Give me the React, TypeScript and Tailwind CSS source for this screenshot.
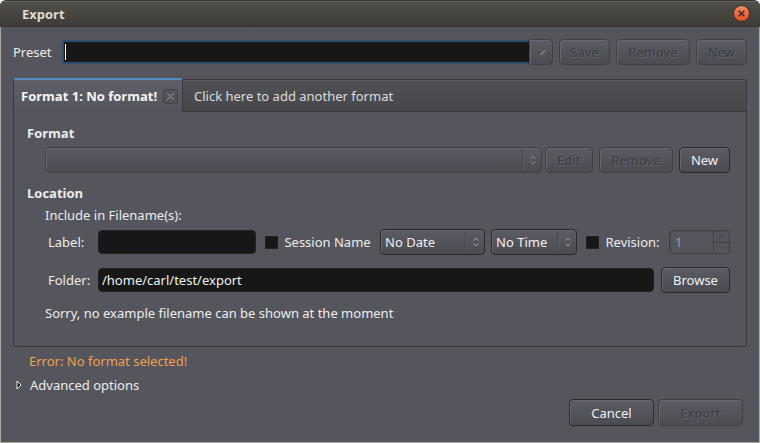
import { useState } from "react";
import type { ButtonHTMLAttributes, SelectHTMLAttributes } from "react";
import { clsx } from "clsx";

const raised =
  "rounded-[4px] border bg-linear-to-b from-[#5b5b65] to-[#4b4c52] shadow-[inset_1px_1px_0_#676772]";
const enabledLook = "border-[#2b2b2f] text-[#f0f0f0]";
const disabledLook =
  "border-[#404145] text-[#3c3c43] [text-shadow:1px_1px_0_#65656f]";
const field =
  "h-6 rounded-[4px] border border-[#222224] bg-[#171717] px-[3px] text-[#f0f0f0] outline-none";
const heading = "font-['Open_Sans','Noto_Sans',sans-serif] font-bold";

function Button({
  className,
  disabled,
  ...rest
}: ButtonHTMLAttributes<HTMLButtonElement>) {
  return (
    <button
      type="button"
      disabled={disabled}
      className={clsx(
        "flex h-[26px] shrink-0 items-center justify-center",
        raised,
        disabled ? disabledLook : enabledLook,
        className,
      )}
      {...rest}
    />
  );
}

function UpDown({ color }: { color: string }) {
  return (
    <svg width="8" height="10" viewBox="0 0 8 10" fill="none" stroke={color} strokeWidth="1">
      <path d="M1.5 3.5 4 1l2.5 2.5M1.5 6.5 4 9l2.5-2.5" />
    </svg>
  );
}

function Combo({
  className,
  options,
  disabled,
  ...rest
}: SelectHTMLAttributes<HTMLSelectElement> & { options: string[] }) {
  return (
    <div className={clsx("relative h-[26px]", className)}>
      <select
        disabled={disabled}
        className={clsx(
          "h-full w-full appearance-none pl-1 pr-5 opacity-100 outline-none",
          raised,
          disabled ? disabledLook : enabledLook,
        )}
        {...rest}
      >
        {options.map((o) => (
          <option key={o}>{o}</option>
        ))}
      </select>
      <span className="pointer-events-none absolute inset-y-[3px] right-0 flex w-5 items-center justify-center border-l border-[#47474e] shadow-[inset_1px_0_0_#5d5d67]">
        <UpDown color={disabled ? "#86868c" : "#a0a0a4"} />
      </span>
    </div>
  );
}

function Check({ label }: { label: string }) {
  return (
    <label className="flex items-center gap-1.5 whitespace-nowrap">
      <input
        type="checkbox"
        className="size-[13px] appearance-none border border-[#242426] bg-[#171717] checked:bg-[#4a86bd]"
      />
      {label}
    </label>
  );
}

function TitleBar() {
  return (
    <header className="flex h-[27px] items-center justify-between rounded-t-[6px] border-t border-b border-t-[#35342f] border-b-[#33322e] bg-linear-to-b from-[#504f49] to-[#3d3c38] pr-[10px] pl-[22px] shadow-[inset_0_1px_0_#66655e]">
      <h1 className={clsx(heading, "text-[#dfdbd2]")}>Export</h1>
      <button
        type="button"
        aria-label="Close"
        className="flex size-[17px] items-center justify-center rounded-full border border-[#30302c] bg-linear-to-b from-[#f5885f] to-[#e04f1d]"
      >
        <svg width="9" height="9" viewBox="0 0 8 8" stroke="#3a2119" strokeWidth="1.2">
          <path d="m1.5 1.5 5 5m0-5-5 5" />
        </svg>
      </button>
    </header>
  );
}

function PresetRow() {
  const [preset, setPreset] = useState("");
  return (
    <div className="flex items-center gap-1.5">
      <label htmlFor="preset" className="w-[43px]">
        Preset
      </label>
      <div className="relative flex flex-1">
        <input
          id="preset"
          value={preset}
          onChange={(e) => setPreset(e.target.value)}
          className="my-px h-6 min-w-0 flex-1 rounded-l-[3px] border-2 border-r-0 border-[#2f4c6c] bg-[#171717] px-1 text-[#f0f0f0] outline-none"
        />
        {preset === "" && (
          <span className="pointer-events-none absolute top-[5px] left-[3px] h-4 w-px bg-white" />
        )}
        <Button disabled aria-label="Show presets" className="w-6 rounded-l-none">
          <svg width="10" height="7" viewBox="0 0 10 7" fill="none">
            <path d="M1 2.5 4.5 6" stroke="#404047" />
            <path d="M4.5 6 9 1.5" stroke="#b8b8bc" />
          </svg>
        </Button>
      </div>
      <Button disabled className="w-[51px]">Save</Button>
      <Button disabled className="w-[74px]">Remove</Button>
      <Button disabled className="w-[51px]">New</Button>
    </div>
  );
}

function TabBar() {
  return (
    <div className="flex h-[34px]">
      <div className="flex w-[170px] shrink-0 items-center justify-between rounded-t-[3px] border-t-2 border-r border-l border-t-[#558dc4] border-r-[#38393c] border-l-[#38393c] bg-linear-to-b from-[#5e5e69] to-[#55555d] pr-1 pl-[7px]">
        <button type="button" className={clsx(heading, "whitespace-nowrap text-[#f4f4f4]")}>
          Format 1: No format!
        </button>
        <button
          type="button"
          aria-label="Close format"
          className="flex size-[15px] items-center justify-center rounded-[3px] border border-[#424247] bg-[#53535b]"
        >
          <svg width="9" height="9" viewBox="0 0 9 9" stroke="#929297" strokeWidth="1">
            <path d="m1 1 7 7m0-7-7 7" />
          </svg>
        </button>
      </div>
      <button
        type="button"
        className="mt-px flex flex-1 items-center rounded-tr-[4px] border-t border-r border-b border-[#38393c] bg-linear-to-b from-[#4f5055] to-[#47484b] pl-[11px] text-left text-[#dcdcdc] shadow-[inset_0_1px_0_#595a60]"
      >
        Click here to add another format
      </button>
    </div>
  );
}

function FormatSection() {
  return (
    <section>
      <h2 className={heading}>Format</h2>
      <div className="mt-1 flex gap-1.5 pl-[18px]">
        <div className="flex flex-1 gap-[3px]">
          <Combo disabled aria-label="Format" options={[""]} className="flex-1" />
          <Button disabled className="w-12">Edit</Button>
        </div>
        <Button disabled className="w-[74px]">Remove</Button>
        <Button className="w-[51px]">New</Button>
      </div>
    </section>
  );
}

function Revision() {
  return (
    <div className="flex h-6 w-[61px] rounded-[4px] border border-[#404145] shadow-[inset_1px_1px_0_#4c4c53]">
      <input
        aria-label="Revision number"
        disabled
        defaultValue="1"
        className="w-0 min-w-0 flex-1 bg-transparent pl-[5px] text-[#9a9a9f]"
      />
      <div className="flex w-4 flex-col divide-y divide-[#404145] border-l border-[#404145] text-[#3c3c43]">
        <button type="button" disabled aria-label="Increase" className="flex flex-1 items-center justify-center">
          <svg width="8" height="5" viewBox="0 0 8 5" fill="none" stroke="currentColor">
            <path d="m1 4 3-3 3 3" />
          </svg>
        </button>
        <button type="button" disabled aria-label="Decrease" className="flex flex-1 items-center justify-center">
          <svg width="8" height="5" viewBox="0 0 8 5" fill="none" stroke="currentColor">
            <path d="m1 1 3 3 3-3" />
          </svg>
        </button>
      </div>
    </div>
  );
}

function LocationSection() {
  return (
    <section className="mt-[10px]">
      <h2 className={heading}>Location</h2>
      <div className="pl-[18px]">
        <p className="mt-0.5">Include in Filename(s):</p>
        <div className="mt-1 flex items-center justify-between">
          <div className="flex items-center">
            <label htmlFor="label" className="w-[53px] pl-[3px]">
              Label:
            </label>
            <input id="label" className={clsx(field, "w-[158px]")} />
          </div>
          <Check label="Session Name" />
          <div className="flex gap-1.5">
            <Combo aria-label="Date" options={["No Date"]} className="w-[105px]" />
            <Combo aria-label="Time" options={["No Time"]} className="w-[86px]" />
          </div>
          <Check label="Revision:" />
          <Revision />
        </div>
        <div className="mt-3 flex items-center">
          <label htmlFor="folder" className="w-[53px] shrink-0 pl-[3px]">
            Folder:
          </label>
          <input
            id="folder"
            defaultValue="/home/carl/test/export"
            className={clsx(field, "mr-[7px] min-w-0 flex-1")}
          />
          <Button className="w-[69px]">Browse</Button>
        </div>
        <p className="mt-[10px]">Sorry, no example filename can be shown at the moment</p>
      </div>
    </section>
  );
}

export default function App() {
  return (
    <div className="min-h-screen bg-white">
      <div className="flex min-h-screen flex-col font-['Noto_Sans','Open_Sans',sans-serif] text-[13px] leading-5 text-[#ececec]">
        <TitleBar />
        <main className="flex-1 border-r border-b border-l border-[#aaa79e] bg-[#55555d] px-3 pt-3">
          <PresetRow />
          <div className="mt-[13px]">
            <TabBar />
            <div className="rounded-b-[4px] border-r border-b border-l border-[#38393c] pt-[11px] pr-4 pb-[23px] pl-[13px]">
              <FormatSection />
              <LocationSection />
            </div>
          </div>
          <p className="mt-1 pl-4 text-[#f0a04b]">Error: No format selected!</p>
          <details className="mt-1">
            <summary className="flex list-none items-center gap-2 pl-[3px]">
              <svg width="6" height="10" viewBox="0 0 6 10" fill="#171717" stroke="#f0f0f0">
                <path d="M1 1v8l4-4Z" />
              </svg>
              Advanced options
            </summary>
          </details>
          <footer className="mt-1 flex justify-end gap-1 pr-1">
            <Button className="h-[27px] w-[85px]">Cancel</Button>
            <Button disabled className="h-[27px] w-[85px]">Export</Button>
          </footer>
        </main>
      </div>
    </div>
  );
}
